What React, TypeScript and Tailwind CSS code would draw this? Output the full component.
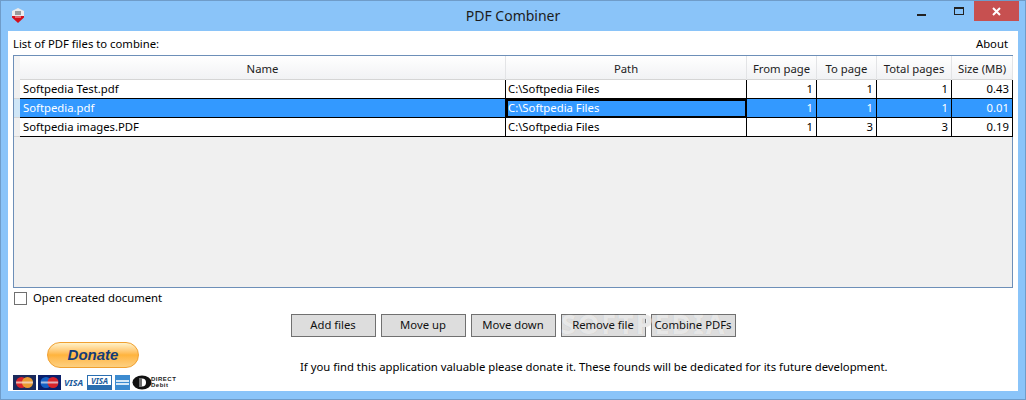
const columns = "grid-cols-[6px_486px_241px_70px_60px_75px_61px]";

const rows = [
  { name: "Softpedia Test.pdf", path: "C:\\Softpedia Files", from: 1, to: 1, total: 1, size: "0.43" },
  { name: "Softpedia.pdf", path: "C:\\Softpedia Files", from: 1, to: 1, total: 1, size: "0.01", selected: true },
  { name: "Softpedia images.PDF", path: "C:\\Softpedia Files", from: 1, to: 3, total: 3, size: "0.19" },
];

const headers = ["Name", "Path", "From page", "To page", "Total pages", "Size (MB)"];
const buttons = ["Add files", "Move up", "Move down", "Remove file", "Combine PDFs"];

function AppIcon() {
  return (
    <svg width="16" height="16" viewBox="0 0 16 16">
      <path d="M8 0l6 3v6l-6 3-6-3V3z" fill="#ececec" />
      <rect x="5" y="3" width="6" height="4" fill="#9a9a9a" />
      <path d="M2 8h12v1.5L8 15 2 9.500z" fill="#d3101c" />
      <rect x="5" y="8.500" width="6" height="1" fill="#f6c0c0" />
    </svg>
  );
}

function Row({ row }: { row: (typeof rows)[number] }) {
  const cell = `border-r border-b border-black px-[3px] leading-[18px] h-[19px] overflow-hidden ${row.selected ? "bg-[#3399ff] text-white" : "bg-white text-black"}`;
  return (
    <div className={`grid ${columns}`}>
      <div className={`border-b border-[#d6d6d6] ${row.selected ? "bg-[#cfe6f7]" : "bg-[#f0f0f0]"}`} />
      <div className={cell}>{row.name}</div>
      <div className={`${cell} !pl-[2px] ${row.selected ? "outline-2 -outline-offset-2 outline-black" : ""}`}>{row.path}</div>
      <div className={`${cell} text-right`}>{row.from}</div>
      <div className={`${cell} text-right`}>{row.to}</div>
      <div className={`${cell} text-right`}>{row.total}</div>
      <div className={`${cell} text-right`}>{row.size}</div>
    </div>
  );
}

function CardMarks() {
  return (
    <div className="flex items-center h-[16px] w-[160px]">
      <svg width="23" height="15" viewBox="0 0 23 15">
        <rect width="23" height="15" fill="#1b2a5c" />
        <circle cx="8.5" cy="7.5" r="5.5" fill="#d8232a" />
        <circle cx="14.5" cy="7.5" r="5.5" fill="#e99b33" />
        <rect x="3" y="6.500" width="17" height="2" fill="#f3d8c8" opacity="0.8" />
      </svg>
      <svg className="ml-[2px]" width="23" height="15" viewBox="0 0 23 15">
        <rect width="23" height="15" fill="#0a1f6b" />
        <circle cx="8" cy="7.5" r="5.500" fill="#1560c4" />
        <circle cx="15" cy="7.5" r="5.500" fill="#d8232a" />
        <rect x="3" y="6.500" width="17" height="2" fill="#e6e6f0" opacity="0.7" />
      </svg>
      <span className="w-[19px] ml-[3px] text-[9px] font-bold italic text-[#1a5a9c] leading-none">VISA</span>
      <div className="ml-[4px] w-[25px] h-[15px] border border-[#2a6eb0] flex flex-col bg-white">
        <span className="h-[9px] text-[8px] font-bold italic leading-[9px] text-center text-[#1a5a9c]">VISA</span>
        <span className="flex-1 bg-[#2a6eb0]" />
      </div>
      <svg className="ml-[3px]" width="15" height="15" viewBox="0 0 15 15">
        <rect width="15" height="15" fill="#3c8bd0" />
        <rect x="1" y="5" width="13" height="2" fill="#d5e8f7" />
        <rect x="1" y="8" width="13" height="2" fill="#d5e8f7" />
      </svg>
      <svg className="ml-[2px]" width="20" height="15" viewBox="0 0 20 15">
        <ellipse cx="10" cy="7.500" rx="9.500" ry="7" fill="#111" />
        <path d="M10 3.500a4 4 0 0 1 0 8z" fill="#fff" />
        <path d="M7 3h3v9H7z" fill="#fff" opacity="0.4" />
      </svg>
      <span className="-ml-[1px] w-[22px] text-[6px] font-bold leading-[6px] text-[#222] tracking-[0.5px] font-['Liberation_Sans',sans-serif]">
        DIRECT
        <br />
        Debit
      </span>
    </div>
  );
}

export default function App() {
  return (
    <div className="w-[1026px] h-[400px] flex flex-col bg-[#8ac4f9] border border-[#6f9cc9] text-[11.3px] text-black font-['Noto_Sans','Open_Sans',sans-serif]">
      <div className="h-[30px] shrink-0 flex items-start relative">
        <div className="pl-[9px] pt-[7px]">
          <AppIcon />
        </div>
        <div className="absolute inset-x-0 top-[5px] text-center text-[14px] leading-[20px] text-[#1c1c1c]">PDF Combiner</div>
        <div className="ml-auto flex items-start pr-[6px]">
          <div className="w-[45px] h-[20px] flex items-end justify-center pb-[5px]">
            <div className="w-[9px] h-[2px] bg-[#222]" />
          </div>
          <div className="w-[30px] h-[20px] flex items-center justify-center">
            <div className="w-[10px] h-[8px] mb-[1px] border border-t-2 border-[#222]" />
          </div>
          <div className="w-[45px] h-[20px] bg-[#c75050] flex items-center justify-center">
            <svg width="9" height="9" viewBox="0 0 9 9">
              <path d="M1 1l7 7M8 1l-7 7" stroke="#fff" strokeWidth="2" />
            </svg>
          </div>
        </div>
      </div>

      <div className="mx-[7px] mb-[8px] flex-1 min-h-0 bg-white flex flex-col px-[5px] relative">
        <div className="flex justify-between h-[24px] pt-[5px] leading-[16px] pr-[5px]">
          <span>List of PDF files to combine:</span>
          <span>About</span>
        </div>

        <div className="h-[233px] w-[1000px] border border-[#6d8fb8] bg-[#f0f0f0] shrink-0">
          <div className={`grid ${columns} h-[24px] border-b border-[#d5d5d5] bg-gradient-to-b from-white to-[#f1f2f4]`}>
            <div className="bg-[#f4f4f4]" />
            {headers.map((h) => (
              <div key={h} className="border-r border-[#e3e4e6] text-center leading-[25px] text-[#222]">
                {h}
              </div>
            ))}
          </div>
          {rows.map((row) => (
            <Row key={row.name} row={row} />
          ))}
        </div>

        <label className="flex items-center gap-[6px] h-[20px] pl-[1px]">
          <span className="w-[13px] h-[13px] border border-[#707070] bg-white" />
          <span className="leading-[16px]">Open created document</span>
        </label>

        <div className="flex justify-center gap-[5px] mt-[6px] relative">
          {buttons.map((b) => (
            <div key={b} className="w-[85px] h-[23px] border border-[#707070] bg-[#dddddd] text-center leading-[20px] text-[#111]">
              <span className="relative z-10">{b}</span>
            </div>
          ))}
          <div className="absolute z-[5] left-[548px] -top-[4px] text-[27px] font-bold leading-[28px] tracking-[2px] text-white/60 [text-shadow:0_0_1px_#c4c4c4] pointer-events-none">SOFTPEDIA</div>
        </div>

        <div className="flex items-start mt-[5px]">
          <div className="w-[164px] ml-[-2px] flex flex-col items-center shrink-0">
            <div className="w-[92px] h-[26px] rounded-[13px] border border-[#f0a030] bg-gradient-to-b from-[#fff2c8] via-[#ffb43c] to-[#fdd080] text-center text-[15px] font-bold italic leading-[24px] text-[#143c78] font-['Liberation_Sans',sans-serif]">
              Donate
            </div>
            <div className="mt-[6px]">
              <CardMarks />
            </div>
          </div>
          <div className="flex-1 pt-[17px] pl-[125px] leading-[16px] whitespace-nowrap">
            If you find this application valuable please donate it. These founds will be dedicated for its future development.
          </div>
        </div>
      </div>
    </div>
  );
}
